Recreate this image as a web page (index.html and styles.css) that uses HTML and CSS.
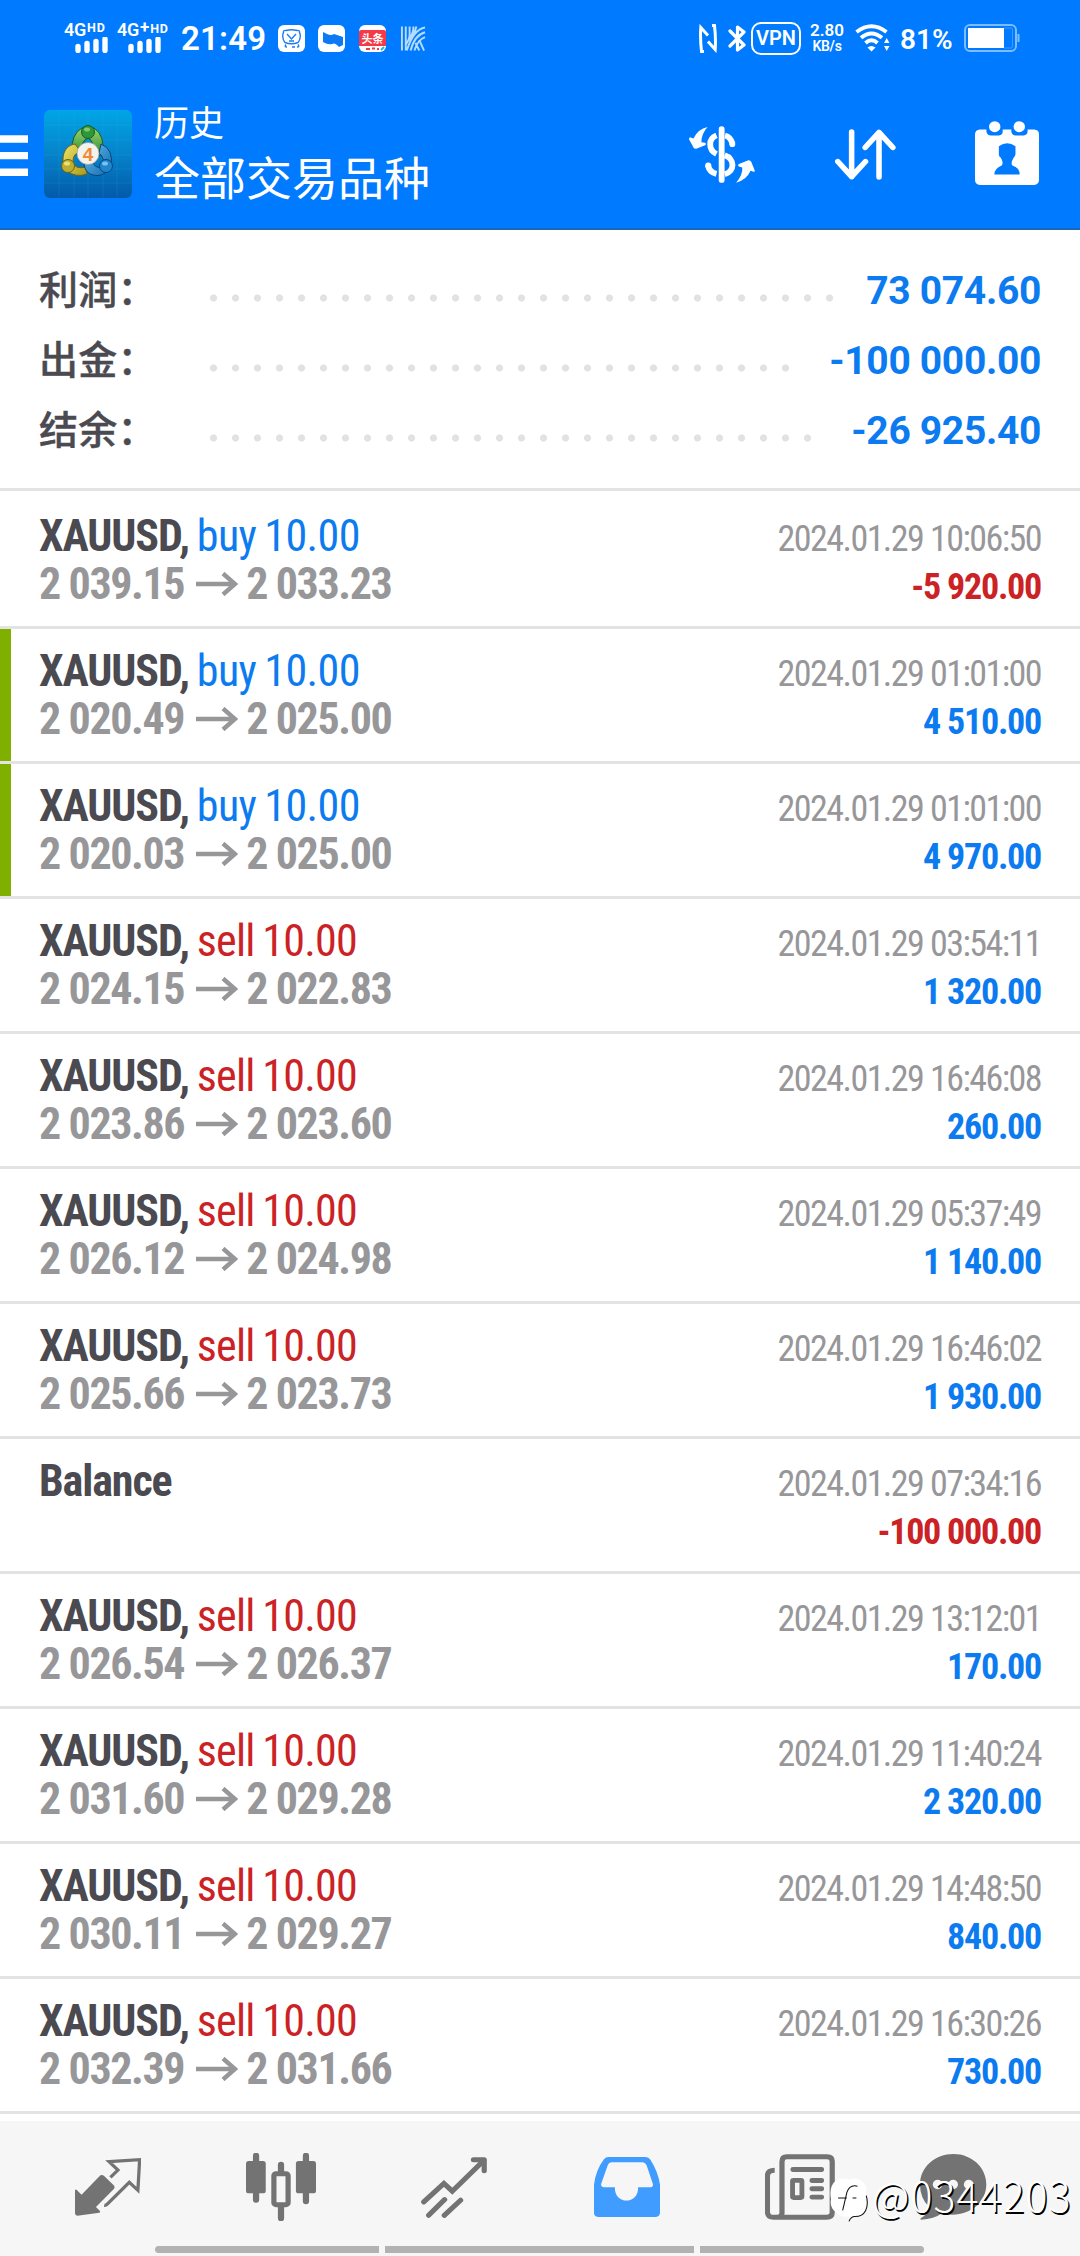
FILE: index.html
```html
<!DOCTYPE html>
<html lang="zh-CN">
<head>
<meta charset="utf-8">
<title>历史</title>
<link rel="stylesheet" href="styles.css">
</head>
<body>
<div class="screen">
  <header class="header">
    <div class="status">
      <div class="sim sim-a">
        <span class="net">4G<sup>HD</sup></span>
        <svg width="33" height="16" viewBox="0 0 33 16"><path d="M3 9.500V13.500M12 6.500V13.500M21 4.500V13.500M30 2V13.500" class="bars"/></svg>
      </div>
      <div class="sim sim-b">
        <span class="net">4G<sup><span class="plus">+</span>HD</sup></span>
        <svg width="33" height="16" viewBox="0 0 33 16"><path d="M3 9.500V13.500M12 6.500V13.500M21 4.500V13.500M30 2V13.500" class="bars"/></svg>
      </div>
      <span class="clock">21:49</span>
      <svg class="app" viewBox="0 0 27 27"><rect width="27" height="27" rx="6" fill="#fff"/><path d="M7 17.500C4 14 4.500 9 5.500 7.500Q5 5 8 5.500Q13.500 4 19 5.500Q22 5 21.500 7.500C22.500 9 23 14 20 17.500Q13.500 20 7 17.500ZM9 9L13.500 14L18 9M11 16H16M8 19.500Q6 22 9 22M14 22H17M20 19.500Q22 22 19 22" fill="none" stroke="#1c7cf2" stroke-width="1.400"/></svg>
      <svg class="app" viewBox="0 0 27 27"><rect width="27" height="27" rx="6" fill="#fff"/><path d="M5 7L9 9Q13 11 16 9L25 12V20L21 22Q17 17 14 19Q10 20 5 17Z" fill="#0d79f2"/></svg>
      <svg class="app app-news" viewBox="0 0 27 27"><rect width="27" height="27" rx="6" fill="#fff"/><path d="M0 6.500Q0 5 2 5H25Q27 5 27 7V21H0Z" fill="#f43a46"/><text x="13.500" y="17.500" class="app-text" text-anchor="middle">头条</text><path d="M7 24H11M13 23.500H16M18 24H20" stroke="#f43a46" stroke-width="2"/><path d="M22 25L25 22" stroke="#23b8cf" stroke-width="2"/></svg>
      <svg class="app app-last" viewBox="0 0 27 27"><g fill="none" stroke="#b5dbff" stroke-width="2"><path d="M2 1V26M6 1V26M10 1V9Q10 14 6 20M14 1Q14 8 10 13M17 1Q15 10 9 15M26 2Q14 4 7 26M26 7Q15 10 11 26M26 12Q18 15 15 26M16 18L20 26M20 15L25 26"/></g></svg>
      <svg class="nfc" viewBox="0 0 18 29"><path d="M5 27.500H2.500Q1 15 1.800 3.500L9 11.500M13 1.500H15.500Q17 14 16.200 25.500L9 17.500" fill="none" stroke="#fff" stroke-width="3"/></svg>
      <svg class="bt" viewBox="0 0 18 29"><path d="M2 7L16 21L9.500 26V3L16 8L2 22" fill="none" stroke="#fff" stroke-width="3.200" stroke-linejoin="round" stroke-linecap="round"/></svg>
      <span class="vpn">VPN</span>
      <span class="rate"><b>2.80</b><i>KB/s</i></span>
      <svg class="wifi" viewBox="0 0 36 28"><g fill="none" stroke="#fff" stroke-width="3.900"><path d="M1.500 8Q16.500-3.500 31.500 8M6 13.800Q16.500 5 27 13.800M10.500 19Q16.500 13.500 22.500 19"/></g><path d="M12.500 23.500Q16.500 20.500 20.500 23.500L16.500 27.500Z" fill="#fff"/><path d="M29 19L31.700 14L34.500 19ZM29 22L31.700 27L34.500 22Z" fill="#fff"/></svg>
      <span class="pct">81%</span>
      <svg class="battery" viewBox="0 0 56 28"><rect x="1" y="1" width="51" height="26" rx="5" fill="none" stroke="#7cbcff" stroke-width="2"/><rect x="4" y="4" width="36" height="20" fill="#fff"/><path d="M40 4H47Q48.500 4 48.500 6V22Q48.500 24 47 24H40" fill="none" stroke="#3f9bff"/><path d="M54.500 10V18" stroke="#7cbcff" stroke-width="2"/></svg>
    </div>
    <div class="toolbar">
      <svg class="menu" viewBox="0 0 28 42"><path d="M0 4H28M0 20.600H28M0 37.200H28" stroke="#fff" stroke-width="7.400"/></svg>
      <svg class="logo" viewBox="0 0 88 88">
        <defs>
          <linearGradient id="sky" x1="0" y1="0" x2="0" y2="1"><stop offset="0" stop-color="#00a6e6"/><stop offset=".5" stop-color="#0583ca"/><stop offset="1" stop-color="#035aa9"/></linearGradient>
          <linearGradient id="green" x1="0" y1="0" x2="0" y2="1"><stop offset="0" stop-color="#9bd56d"/><stop offset="1" stop-color="#23852b"/></linearGradient>
          <linearGradient id="gold" x1="0" y1="0" x2="1" y2="1"><stop offset="0" stop-color="#eee469"/><stop offset="1" stop-color="#aa9918"/></linearGradient>
          <linearGradient id="blue" x1="0" y1="0" x2="1" y2="1"><stop offset="0" stop-color="#6bc0ed"/><stop offset="1" stop-color="#0c66ae"/></linearGradient>
        </defs>
        <rect width="88" height="88" rx="6" fill="url(#sky)"/>
        <path d="M0 15H88M0 30H88M0 45H88M0 59H88M0 73H88M15 0V88M30 0V88M44 0V88M59 0V88M73 0V88" stroke="#3db5eb" stroke-width=".6" opacity=".25"/>
        <g stroke-width="1">
          <path d="M28 42Q27 24 38 18H50Q61 25 59 45L50 47Q51 31 44 28Q37 30 36 46Z" fill="url(#green)" stroke="#155b23"/>
          <path d="M31 34C18 36 16 52 23 61Q32 68 43 64L42 57Q30 60 29 51Q29 43 37 42Z" fill="url(#gold)" stroke="#6b6312"/>
          <path d="M57 34Q70 39 67 57Q59 68 49 65Q41 63 40 54L48 51Q51 59 58 57Q62 49 55 43Z" fill="url(#blue)" stroke="#07457b"/>
          <circle cx="44" cy="22" r="6.500" fill="#2f963a" stroke="#125b25"/><circle cx="24" cy="56" r="6.500" fill="#beae30" stroke="#6b6312"/><circle cx="62" cy="56" r="6.500" fill="#1f86cb" stroke="#07457b"/>
          <ellipse cx="43" cy="19.500" rx="3" ry="2" fill="#a5db86" opacity=".7"/><ellipse cx="23" cy="53.500" rx="3" ry="2" fill="#fff59b" opacity=".7"/><ellipse cx="61" cy="53.500" rx="3" ry="2" fill="#9ddcff" opacity=".7"/>
        </g>
        <circle cx="44" cy="43.500" r="11" fill="#f3f2ec" stroke="#999" stroke-width=".7"/>
        <text x="44" y="50.500" text-anchor="middle" class="four">4</text>
      </svg>
      <div class="titles"><span class="sub">历史</span><span class="main">全部交易品种</span></div>
      <svg class="act-money" viewBox="433 377 192 169" preserveAspectRatio="none"><g fill="none" stroke="#fff" stroke-width="17"><path d="M528 386V537" stroke-linecap="round"/><path d="M513 405C488 415 489 448 513 460"/><path d="M538 405Q553 408 560 430" stroke-linecap="butt"/><path d="M537 464C567 474 567 512 537 520M513 519Q492 514 488 493"/></g><g fill="#fff"><circle cx="559" cy="431" r="8.500"/><circle cx="489" cy="494" r="9"/><path d="M487 380Q459 386 446 414L436 410Q433 411 433 416L446 441Q449 446 456 444L480 434Q485 431 480 427L469 425Q469 400 487 380ZM570 545Q600 538 612 510L621 513Q625 514 624 508L614 483Q611 477 604 479L578 490Q573 494 578 497L588 500Q590 521 570 545Z"/></g></svg>
      <svg class="act-sort" viewBox="856 386 176 152" preserveAspectRatio="none"><path d="M904 395V528M864 483L904 528L944 483M983 529V396M943 441L983 396L1023 441" fill="none" stroke="#fff" stroke-width="16" stroke-linecap="round" stroke-linejoin="round"/></svg>
      <svg class="act-cal" viewBox="1262 362 185 191" preserveAspectRatio="none"><path d="M1276 387H1295V394Q1297 405 1308 405H1331Q1342 404 1342 394V387H1367V394Q1369 405 1380 405H1403Q1413 404 1414 394V387H1433Q1447 388 1447 401V539Q1446 552 1433 553H1276Q1263 552 1262 539V401Q1263 388 1276 387Z" fill="#fff"/><circle cx="1319" cy="379" r="16.500" fill="#fff"/><circle cx="1390" cy="379" r="16.500" fill="#fff"/><path d="M1331 437Q1355 420 1379 437V461Q1378 468 1374 471Q1364 488 1370 495Q1392 503 1391 522H1318Q1318 504 1339 495Q1346 486 1336 471Q1330 467 1331 459Z" fill="#007aff"/></svg>
    </div>
  </header>

  <section class="summary">
    <div class="sum"><span class="label">利润：</span><span class="dots"></span><span class="total">73 074.60</span></div>
    <div class="sum"><span class="label">出金：</span><span class="dots"></span><span class="total">-100 000.00</span></div>
    <div class="sum"><span class="label">结余：</span><span class="dots"></span><span class="total">-26 925.40</span></div>
  </section>

  <svg class="symbols"><symbol id="to" viewBox="0 0 42 24"><path d="M0 12H38M27 1.500L39 12L27 22.500" fill="none" stroke="#97979a" stroke-width="4.400"/></symbol></svg>

  <main class="list">
    <article class="deal"><div class="left"><p class="name"><b>XAUUSD,</b> <span class="buy">buy 10.00</span></p><p class="price">2 039.15<svg class="to"><use href="#to"/></svg>2 033.23</p></div><div class="right"><time>2024.01.29 10:06:50</time><b class="loss">-5 920.00</b></div></article>
    <article class="deal marked"><div class="left"><p class="name"><b>XAUUSD,</b> <span class="buy">buy 10.00</span></p><p class="price">2 020.49<svg class="to"><use href="#to"/></svg>2 025.00</p></div><div class="right"><time>2024.01.29 01:01:00</time><b class="gain">4 510.00</b></div></article>
    <article class="deal marked"><div class="left"><p class="name"><b>XAUUSD,</b> <span class="buy">buy 10.00</span></p><p class="price">2 020.03<svg class="to"><use href="#to"/></svg>2 025.00</p></div><div class="right"><time>2024.01.29 01:01:00</time><b class="gain">4 970.00</b></div></article>
    <article class="deal"><div class="left"><p class="name"><b>XAUUSD,</b> <span class="sell">sell 10.00</span></p><p class="price">2 024.15<svg class="to"><use href="#to"/></svg>2 022.83</p></div><div class="right"><time>2024.01.29 03:54:11</time><b class="gain">1 320.00</b></div></article>
    <article class="deal"><div class="left"><p class="name"><b>XAUUSD,</b> <span class="sell">sell 10.00</span></p><p class="price">2 023.86<svg class="to"><use href="#to"/></svg>2 023.60</p></div><div class="right"><time>2024.01.29 16:46:08</time><b class="gain">260.00</b></div></article>
    <article class="deal"><div class="left"><p class="name"><b>XAUUSD,</b> <span class="sell">sell 10.00</span></p><p class="price">2 026.12<svg class="to"><use href="#to"/></svg>2 024.98</p></div><div class="right"><time>2024.01.29 05:37:49</time><b class="gain">1 140.00</b></div></article>
    <article class="deal"><div class="left"><p class="name"><b>XAUUSD,</b> <span class="sell">sell 10.00</span></p><p class="price">2 025.66<svg class="to"><use href="#to"/></svg>2 023.73</p></div><div class="right"><time>2024.01.29 16:46:02</time><b class="gain">1 930.00</b></div></article>
    <article class="deal"><div class="left"><p class="name"><b>Balance</b></p></div><div class="right"><time>2024.01.29 07:34:16</time><b class="loss">-100 000.00</b></div></article>
    <article class="deal"><div class="left"><p class="name"><b>XAUUSD,</b> <span class="sell">sell 10.00</span></p><p class="price">2 026.54<svg class="to"><use href="#to"/></svg>2 026.37</p></div><div class="right"><time>2024.01.29 13:12:01</time><b class="gain">170.00</b></div></article>
    <article class="deal"><div class="left"><p class="name"><b>XAUUSD,</b> <span class="sell">sell 10.00</span></p><p class="price">2 031.60<svg class="to"><use href="#to"/></svg>2 029.28</p></div><div class="right"><time>2024.01.29 11:40:24</time><b class="gain">2 320.00</b></div></article>
    <article class="deal"><div class="left"><p class="name"><b>XAUUSD,</b> <span class="sell">sell 10.00</span></p><p class="price">2 030.11<svg class="to"><use href="#to"/></svg>2 029.27</p></div><div class="right"><time>2024.01.29 14:48:50</time><b class="gain">840.00</b></div></article>
    <article class="deal"><div class="left"><p class="name"><b>XAUUSD,</b> <span class="sell">sell 10.00</span></p><p class="price">2 032.39<svg class="to"><use href="#to"/></svg>2 031.66</p></div><div class="right"><time>2024.01.29 16:30:26</time><b class="gain">730.00</b></div></article>
  </main>

  <footer class="footer">
    <nav class="tabs">
      <a class="tab"><svg width="66" height="58" viewBox="219 208 192 174" preserveAspectRatio="none"><path d="M219 304Q221 300 225 305L238 318L293 260Q298 257 303 261L333 291Q336 296 332 301L280 355L291 366Q294 370 290 372L226 381Q219 381 219 374Z" fill="#737373"/><path d="M322 266L344 244L318 219L407 213L402 305L377 281L318 341Q309 351 304 350" fill="none" stroke="#737373" stroke-width="9.500"/></svg></a>
      <a class="tab"><svg width="70" height="68" viewBox="715 192 202 204" preserveAspectRatio="none"><path d="M744 200V332M888 200V337M816 227V250M816 350V388" stroke="#737373" stroke-width="18" stroke-linecap="round"/><rect x="715" y="216" width="57" height="97" rx="8" fill="#737373"/><rect x="859" y="216" width="58" height="97" rx="8" fill="#737373"/><rect x="795.500" y="254" width="41" height="93" rx="6" fill="#f6f6f6" stroke="#737373" stroke-width="15"/></svg></a>
      <a class="tab"><svg width="66" height="61" viewBox="1223 200 190 182" preserveAspectRatio="none"><path d="M1231 334L1289 279L1313 302L1403 211" fill="none" stroke="#737373" stroke-width="15" stroke-linecap="round"/><path d="M1374 208H1405V241M1245 374L1291 327M1290 374L1337 329" fill="none" stroke="#737373" stroke-width="15" stroke-linecap="round" stroke-linejoin="round"/></svg></a>
      <a class="tab"><svg width="66" height="60" viewBox="158 200 193 181" preserveAspectRatio="none"><path fill-rule="evenodd" d="M201 200H309Q318 200 323 208Q346 245 351 284V369Q350 380 339 381H170Q158 380 158 369V284Q163 240 187 207Q192 200 201 200ZM210 216Q202 216 198 226L179 281Q177 290 186 291H219C217 345 289 345 287 291H325Q332 290 330 281L312 226Q307 216 299 216Z" fill="#409cff"/></svg></a>
      <a class="tab"><svg width="70" height="66" viewBox="657 191 202 199" preserveAspectRatio="none"><g fill="none" stroke="#737373"><path d="M685 240Q664 240 664 257V366Q665 382 681 382H835Q851 382 851 367V213Q851 199 836 199H720Q706 199 706 214V370Q705 382 690 382" stroke-width="15"/><path d="M738 238H820M793 271H820M793 296H820M793 321H820" stroke-width="15" stroke-linecap="round"/><rect x="736.500" y="270.500" width="27" height="52" rx="3" stroke-width="14"/></g></svg></a>
      <a class="tab tab-chat"><svg width="67" height="66" viewBox="1103 191 194 199" preserveAspectRatio="none"><path d="M1200 191C1253 191 1295 232 1295 282C1295 335 1252 373 1197 374Q1180 374 1166 370Q1144 388 1106 389Q1103 389 1105 385Q1127 373 1129 351Q1103 323 1103 284C1103 230 1147 191 1200 191Z" fill="#737373"/><g fill="#f6f6f6"><circle cx="1154" cy="283" r="14"/><circle cx="1199" cy="283" r="14"/><circle cx="1244" cy="283" r="14"/></g></svg></a>
    </nav>
    <div class="gesture"><i></i><i></i><i></i></div>
    <div class="watermark"><svg width="38" height="44" viewBox="842 264 108 128" preserveAspectRatio="none"><path d="M859 271Q875 262 895 268Q918 260 934 275Q950 290 944 311Q954 339 942 360Q930 376 910 376L896 390L898 374Q878 382 859 364Q840 349 845 326Q838 288 859 271Z" fill="#fff"/><path d="M865 322H890M920 288Q898 282 890 306L878 358M906 322H917M896 390Q900 378 911 376Q934 377 943 359Q952 340 945 315" fill="none" stroke="#111" stroke-width="3"/></svg><span>@0344203</span></div>
  </footer>
</div>
</body>
</html>
```
FILE: styles.css
```css
* { box-sizing: border-box; }
body { margin: 0; background: #fff; font-family: Roboto, "Noto Sans CJK SC", sans-serif; }
p { margin: 0; }
svg { display: block; flex: none; }
.screen { width: 1080px; height: 2256px; display: flex; flex-direction: column; overflow: hidden; }
.symbols { width: 0; height: 0; position: absolute; }

.header { height: 230px; background: #007aff; border-bottom: 2px solid #1c68b8; color: #fff; }
.status { height: 76px; padding: 0 0 0 64px; display: flex; align-items: center; }
.sim { display: flex; flex-direction: column; width: 53px; height: 32px; flex: none; white-space: nowrap; }
.sim svg { margin: -1px 0 0 11px; }
.sim-b { width: 64px; }
.net { font-size: 18px; line-height: 16px; font-weight: 600; height: 16px; letter-spacing: -.3px; display: flex; }
.net sup { font-size: 12.500px; line-height: 11px; font-weight: 700; letter-spacing: .9px; margin-left: 1px; }
.plus { font-size: 17px; line-height: 11px; }
.bars { stroke: #fff; stroke-width: 5.400; stroke-linecap: round; fill: none; }
.clock { font-size: 33px; font-weight: 600; width: 97px; letter-spacing: .2px; flex: none; }
.app { width: 27px; height: 27px; margin-right: 13px; }
.app-news { margin: 0 14px 0 1px; }
.app-last { width: 26px; margin-right: 273px; }
.app-text { font: 700 11px "Noto Sans CJK SC", sans-serif; fill: #fff; }
.nfc { width: 18px; height: 29px; margin-right: 11px; }
.bt { width: 18px; height: 29px; margin-right: 5px; }
.vpn { width: 50px; height: 33px; border: 2.500px solid #fff; border-radius: 10px; font-size: 20px; font-weight: 600; line-height: 29px; text-align: center; flex: none; }
.rate { width: 34px; margin: 0 11px 0 9px; display: flex; flex-direction: column; align-items: center; font-size: 17px; line-height: 16px; flex: none; }
.rate b { font-weight: 600; }
.rate i { font-style: normal; font-weight: 600; font-size: 14px; letter-spacing: -.3px; }
.wifi { width: 36px; height: 28px; margin-right: 9px; }
.pct { font-size: 28px; font-weight: 600; width: 64px; padding-top: 2px; letter-spacing: 0; flex: none; }
.battery { width: 56px; height: 28px; }

.toolbar { height: 152px; display: flex; align-items: flex-start; }
.menu { width: 28px; height: 42px; margin-top: 59px; }
.logo { width: 88px; height: 88px; margin: 34px 0 0 16px; }
.four { font: 700 19px "Liberation Sans", sans-serif; fill: #f08a35; }
.titles { display: flex; flex-direction: column; margin: 22px 0 0 22px; width: 535px; font-family: "Noto Sans CJK SC", sans-serif; font-weight: 400; }
.sub { font-size: 35px; line-height: 46px; }
.main { font-size: 46px; line-height: 62px; }
.act-money { width: 66px; height: 57px; margin-top: 50px; }
.act-sort { width: 61px; height: 51px; margin: 53px 0 0 80px; }
.act-cal { width: 64px; height: 64px; margin: 45px 0 0 79px; }

.summary { height: 261px; padding: 25px 39px 0; border-bottom: 3px solid #e3e3e3; }
.sum { height: 70px; display: flex; align-items: center; }
.label { width: 163px; font: 500 39px/64px "Noto Sans CJK SC", sans-serif; letter-spacing: .3px; color: #4a4a50; -webkit-text-stroke: .4px #4a4a50; padding-bottom: 6px; flex: none; }
.dots { flex: 1; height: 8px; margin: 15px 28px 0 0; background: radial-gradient(circle at 11.500px 4px, #e2e2e2 3.200px, transparent 3.900px) 0 0 / 22px 8px repeat-x; }
.total { font-size: 39px; font-weight: 700; letter-spacing: -.33px; padding-top: 2px; color: #0d7bf0; white-space: nowrap; }

.list { padding-top: 3px; flex: none; }
.deal { height: 135px; padding: 18px 39px 0; border-bottom: 3px solid #e3e3e3; display: flex; justify-content: space-between; font-family: "Roboto Condensed", Roboto, sans-serif; font-stretch: 75%; }
.marked { background: linear-gradient(#7fb000, #7fb000) 0 0 / 11px 100% no-repeat; }
.name, .price { font-size: 44px; line-height: 48px; white-space: nowrap; }
.name { letter-spacing: -.6px; word-spacing: -1.500px; }
.name b { color: #4a4a50; letter-spacing: -1.100px; }
.price { color: #97979a; font-weight: 700; letter-spacing: -1.400px; display: flex; align-items: center; }
.to { width: 42px; height: 24px; margin: 0 8px 0 12px; }
.buy { color: #0d7bf0; }
.sell { color: #cb2225; letter-spacing: -.8px; }
.right { display: flex; flex-direction: column; align-items: flex-end; padding-top: 3px; font-size: 36px; line-height: 48px; white-space: nowrap; }
.right time { color: #97979a; letter-spacing: -1.550px; }
.right b { letter-spacing: -1.250px; }
.gain { color: #0d7bf0; }
.loss { color: #cb2225; }

.footer { margin-top: auto; height: 135px; background: #f6f6f6; position: relative; display: flex; flex-direction: column; flex: none; }
.tabs { height: 125px; padding: 7px 0 0 21px; display: flex; }
.tab { width: 173px; height: 118px; display: flex; align-items: center; justify-content: center; }
.tab-chat { width: 134px; }
.gesture { display: flex; gap: 6px; padding-left: 155px; }
.gesture i { height: 7px; width: 224px; background: #b2b2b2; }
.gesture i:nth-child(2) { width: 309px; }
.gesture i:first-child { border-radius: 4px 0 0 4px; }
.gesture i:last-child { border-radius: 0 4px 4px 0; }
.watermark { position: absolute; left: 830px; top: 57px; display: flex; gap: 4px; color: #fff; font: 300 41px/33px "Noto Sans CJK SC", sans-serif; letter-spacing: 1.100px; text-shadow: 1.500px 1.500px .5px #000; }
```
